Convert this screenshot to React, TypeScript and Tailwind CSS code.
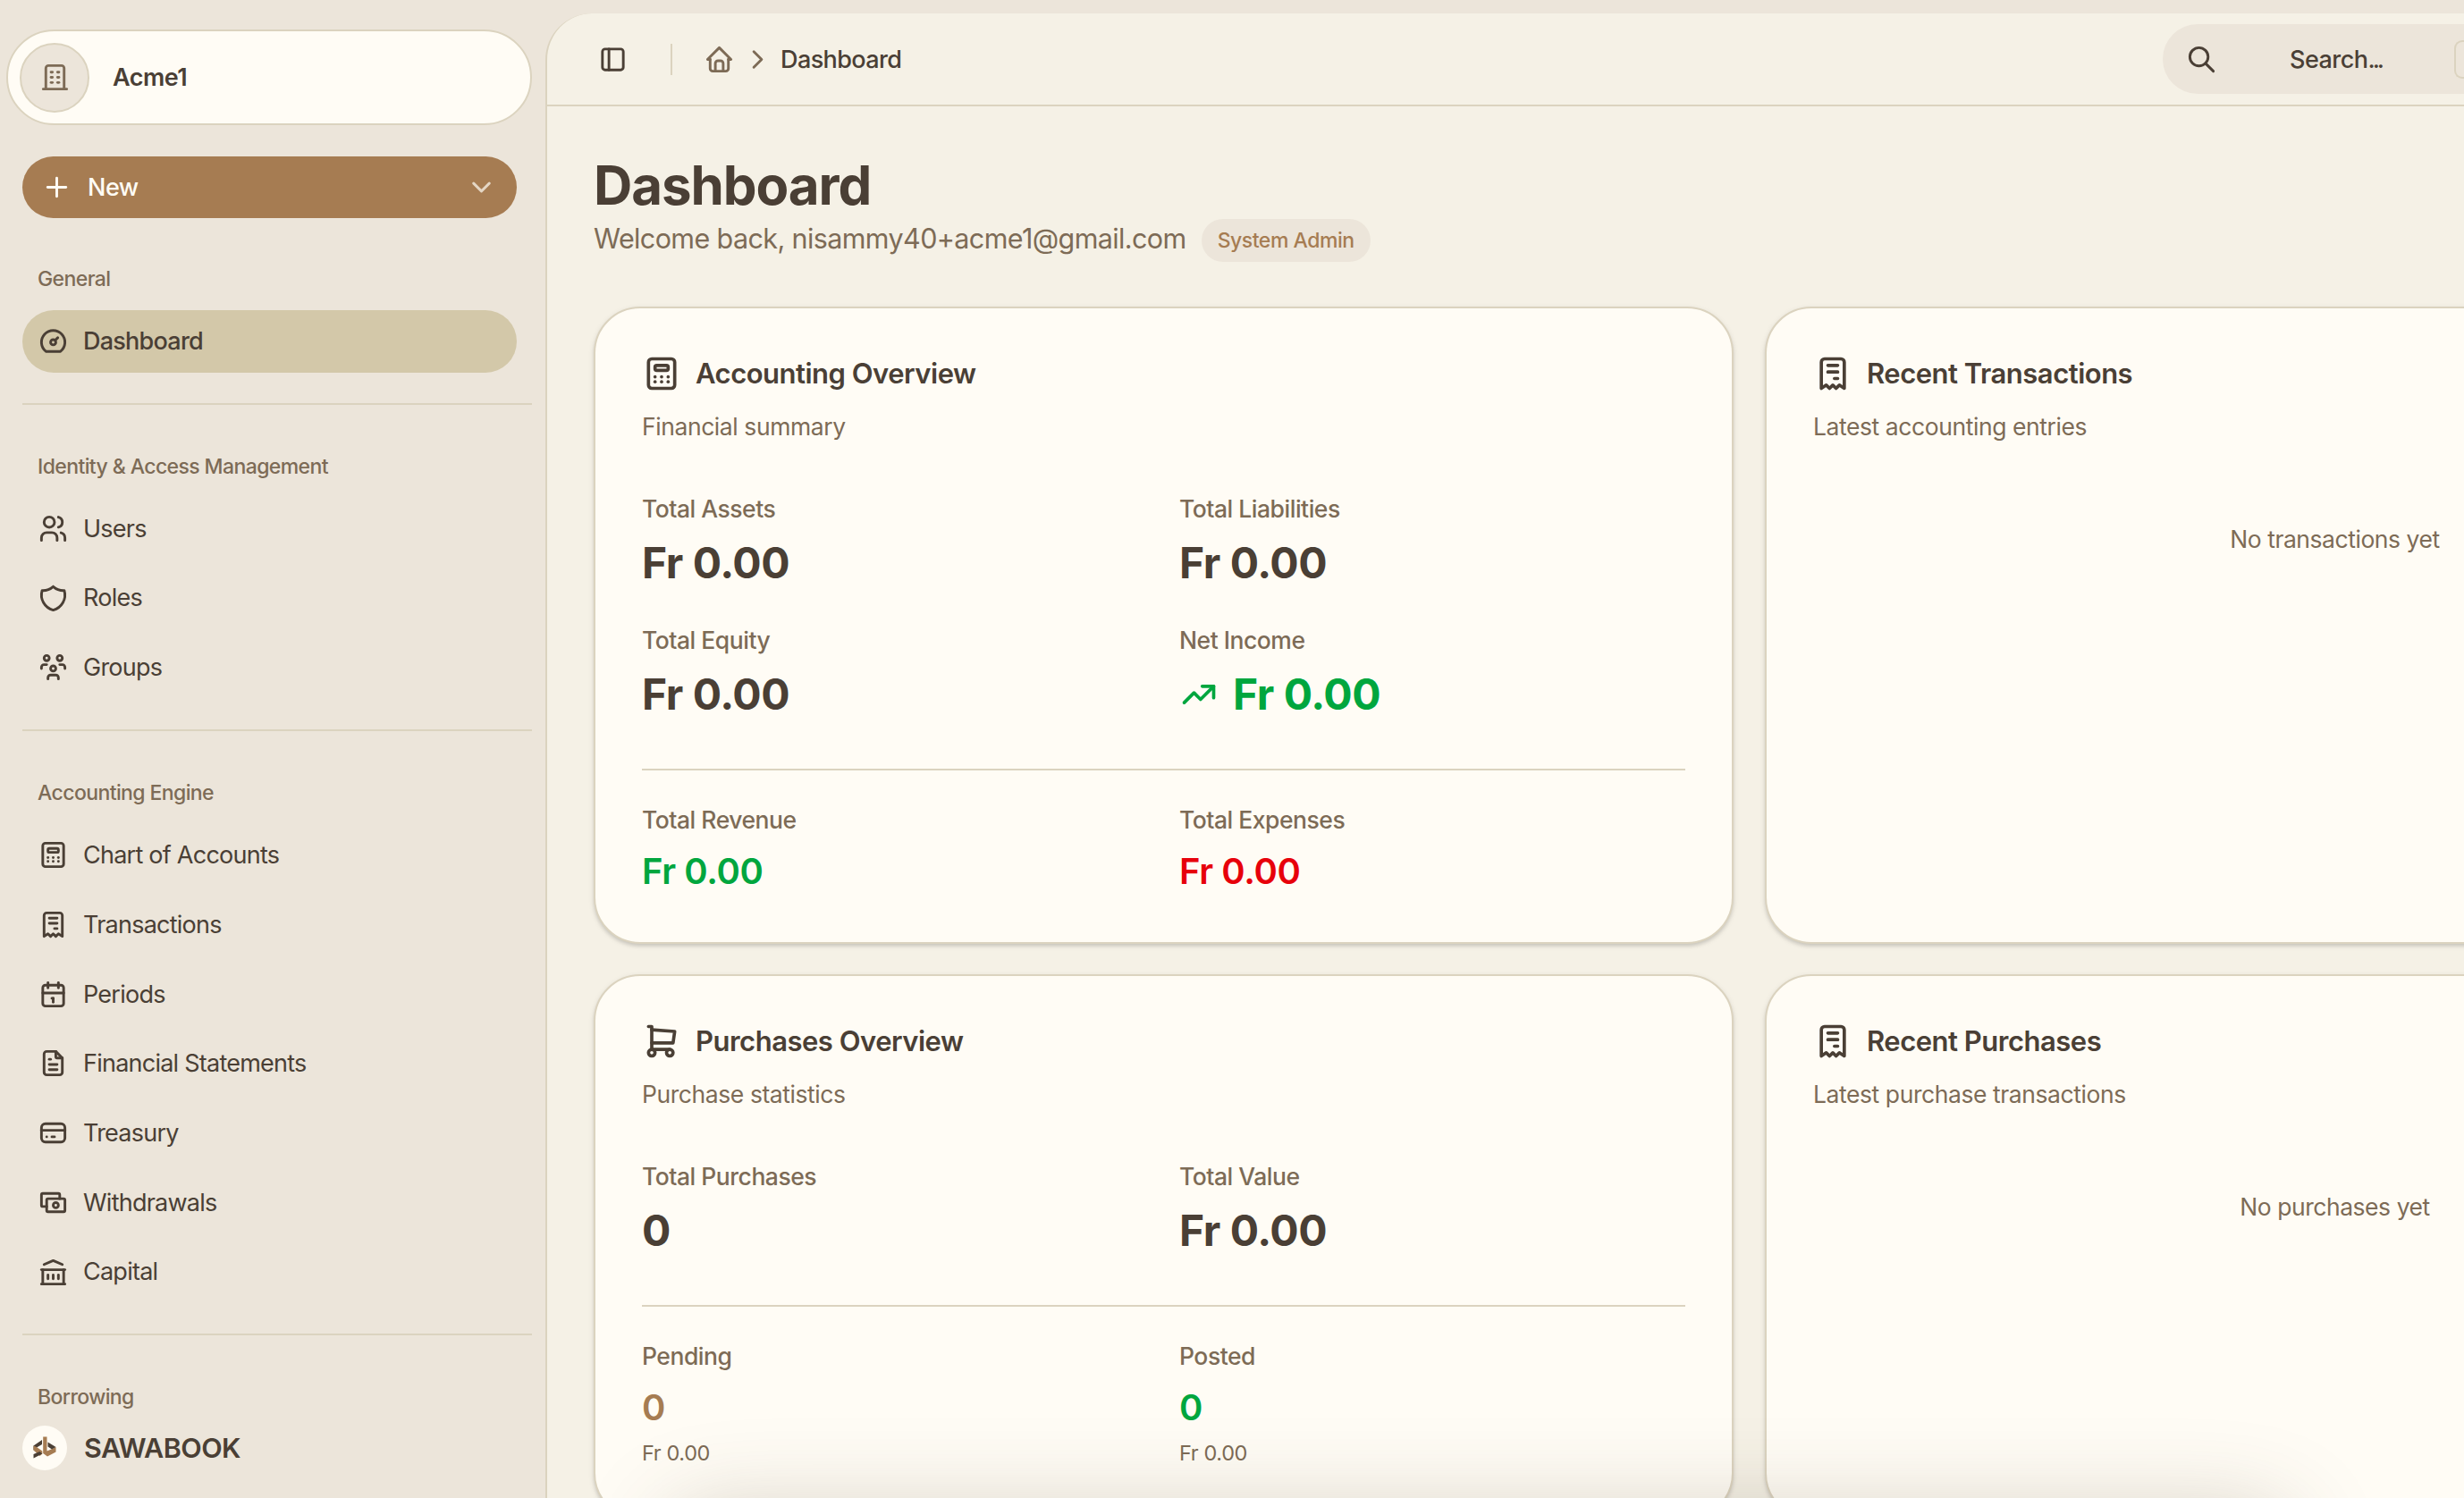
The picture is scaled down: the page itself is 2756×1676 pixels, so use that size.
import React from 'react';
import type { IconType } from 'react-icons';
import {
  TbBuilding,
  TbBuildingBank,
  TbCalculator,
  TbCalendar,
  TbChevronDown,
  TbChevronRight,
  TbCreditCard,
  TbDashboard,
  TbFileText,
  TbHome,
  TbLayoutSidebar,
  TbPlus,
  TbReceipt,
  TbSearch,
  TbShield,
  TbShoppingCart,
  TbTrendingUp,
  TbUsers,
  TbUsersGroup
} from 'react-icons/tb';

interface NavItem {
  label: string;
  icon: IconType;
  active?: boolean;
}

interface NavSection {
  title: string;
  items: NavItem[];
}

interface Stat {
  label: string;
  value: string;
  color?: string;
  icon?: IconType;
  note?: string;
}

const CashIcon: IconType = ({ className }) => (
  <svg className={className} viewBox="0 0 24 24" fill="none" stroke="currentColor" strokeWidth="2" strokeLinecap="round" strokeLinejoin="round">
    <path d="M7 15h-3a1 1 0 0 1 -1 -1v-8a1 1 0 0 1 1 -1h12a1 1 0 0 1 1 1v3" />
    <path d="M7 10a1 1 0 0 1 1 -1h12a1 1 0 0 1 1 1v8a1 1 0 0 1 -1 1h-12a1 1 0 0 1 -1 -1z" />
    <path d="M12 14a2 2 0 1 0 4 0a2 2 0 0 0 -4 0" />
  </svg>
);

const sections: NavSection[] = [
  {
    title: 'General',
    items: [{ label: 'Dashboard', icon: TbDashboard, active: true }]
  },
  {
    title: 'Identity & Access Management',
    items: [
      { label: 'Users', icon: TbUsers },
      { label: 'Roles', icon: TbShield },
      { label: 'Groups', icon: TbUsersGroup }
    ]
  },
  {
    title: 'Accounting Engine',
    items: [
      { label: 'Chart of Accounts', icon: TbCalculator },
      { label: 'Transactions', icon: TbReceipt },
      { label: 'Periods', icon: TbCalendar },
      { label: 'Financial Statements', icon: TbFileText },
      { label: 'Treasury', icon: TbCreditCard },
      { label: 'Withdrawals', icon: CashIcon },
      { label: 'Capital', icon: TbBuildingBank }
    ]
  },
  { title: 'Borrowing', items: [] }
];

const accountingStats: Stat[] = [
  { label: 'Total Assets', value: 'Fr 0.00' },
  { label: 'Total Liabilities', value: 'Fr 0.00' },
  { label: 'Total Equity', value: 'Fr 0.00' },
  { label: 'Net Income', value: 'Fr 0.00', color: 'text-[#00a63e]', icon: TbTrendingUp }
];

const accountingTotals: Stat[] = [
  { label: 'Total Revenue', value: 'Fr 0.00', color: 'text-[#00a63e]' },
  { label: 'Total Expenses', value: 'Fr 0.00', color: 'text-[#e7000b]' }
];

const purchaseStats: Stat[] = [
  { label: 'Total Purchases', value: '0' },
  { label: 'Total Value', value: 'Fr 0.00' }
];

const purchaseTotals: Stat[] = [
  { label: 'Pending', value: '0', color: 'text-[#a67c52]', note: 'Fr 0.00' },
  { label: 'Posted', value: '0', color: 'text-[#00a63e]', note: 'Fr 0.00' }
];

const Logo: React.FC = () => (
  <div className="flex size-[50px] shrink-0 items-center justify-center rounded-full bg-[#fffcf5]">
    <svg className="size-[50px]" viewBox="-0.5 2.5 50 50">
      <path d="M12 25 L21.5 18.5 V23.5 L15.5 27 L12 30z" fill="#4a3f35" />
      <path d="M12 25 L15.5 26.5 L21.8 31 V34 L19 36.5 L12 30z" fill="#a67c52" />
      <path d="M12 34.5 L19 31.5 L21.8 34 L12 39z" fill="#4a3f35" />
      <path d="M22.7 15 H27 V31 L33 28.5 L37 26.5 V32 L27.5 37 L22.7 33.5z" fill="#a67c52" />
      <path d="M28 21 L37 26.5 L32.5 29 L28 26z" fill="#4a3f35" />
    </svg>
  </div>
);

const Sidebar: React.FC = () => (
  <aside className="flex h-full w-[610px] shrink-0 flex-col overflow-hidden">
    <div className="mt-[33px] ml-[7px] flex h-[107px] w-[588px] shrink-0 items-center rounded-full border-2 border-[#dbd3bf] bg-[#fffcf5] pl-[13px]">
      <div className="flex size-[78px] items-center justify-center rounded-full border-2 border-[#dbd3bf] bg-[#ece5da] text-[#7d6b56]">
        <TbBuilding className="size-[35px]" />
      </div>
      <span className="ml-[26px] pt-[2px] text-[27px] font-semibold tracking-[-0.02em]">Acme1</span>
    </div>

    <button className="mt-[35px] ml-[25px] flex h-[69px] w-[553px] shrink-0 items-center rounded-full bg-[#a67c52] pr-[22px] pl-[21px] text-[#fffcf5]">
      <TbPlus className="size-[35px]" />
      <span className="ml-[17px] pt-[2px] text-[27px] font-medium tracking-[-0.02em]">New</span>
      <TbChevronDown className="ml-auto size-[35px] opacity-70" />
    </button>

    <nav className="ml-[25px] min-h-0 flex-1 overflow-hidden">
      {sections.map((section, index) => (
        <div
          key={section.title}
          className={`w-[570px] pb-[34px] ${index === 0 ? 'pt-[33.5px]' : 'pt-[35px]'} ${
            index < sections.length - 1 ? 'border-b-2 border-[#dbd3bf]' : ''
          }`}
        >
          <div className="flex h-[69px] items-center pl-[17px] text-[23px] font-medium tracking-[-0.026em] text-[#7d6b56]">
            {section.title}
          </div>
          <div className="flex w-[553px] flex-col gap-[7.7px]">
            {section.items.map((item) => (
              <a
                key={item.label}
                className={`flex h-[70px] items-center gap-[16px] rounded-full pl-[17px] text-[27px] tracking-[-0.028em] ${
                  item.active ? 'bg-[#d3c8a9] font-medium' : ''
                }`}
              >
                <item.icon className="size-[35px]" />
                <span className="pt-px">{item.label}</span>
              </a>
            ))}
          </div>
        </div>
      ))}
    </nav>

    <div className="flex h-[91px] shrink-0 items-start bg-[#ece5da] pt-[10px] pl-[25px]">
      <Logo />
      <span className="ml-[19px] flex h-[50px] items-center text-[30.5px] font-semibold tracking-[-0.018em]">SAWABOOK</span>
    </div>
  </aside>
);

const Header: React.FC = () => (
  <header className="flex h-[104px] shrink-0 items-center border-b-2 border-[#dbd3bf] pl-[56px]">
    <TbLayoutSidebar className="size-[35px]" />
    <div className="ml-[47px] h-[35px] w-[2px] bg-[#dbd3bf]" />
    <TbHome className="ml-[35px] size-[35px] text-[#7d6b56]" />
    <TbChevronRight className="ml-[8px] size-[35px] text-[#7d6b56]" />
    <span className="ml-[8px] pt-[2px] text-[27px] font-medium tracking-[-0.022em]">Dashboard</span>
    <div className="ml-auto flex h-[78px] w-[337px] items-center rounded-l-full bg-[#ece5da] pl-[26px]">
      <TbSearch className="size-[35px]" />
      <span className="ml-[81px] pt-[2px] text-[27px] font-medium tracking-[-0.02em]">
        Search<span className="tracking-[-0.11em]">...</span>
      </span>
      <div className="ml-auto h-[43px] w-[11px] rounded-l-[9px] border-2 border-r-0 border-[#dbd3bf]" />
    </div>
  </header>
);

interface CardProps {
  title: string;
  subtitle: string;
  icon: IconType;
  children: React.ReactNode;
}

const Card: React.FC<CardProps> = ({ title, subtitle, icon: Icon, children }) => (
  <section className="rounded-[52px] border-2 border-[#dbd3bf] bg-[#fffcf5] p-[52px] shadow-[0_2px_6px_rgba(0,0,0,0.1),0_3px_4px_-1px_rgba(0,0,0,0.12)]">
    <div className="flex h-[42px] items-center gap-[16px]">
      <Icon className="size-[44px]" />
      <h2 className="text-[31px] font-semibold tracking-[-0.016em]">{title}</h2>
    </div>
    <p className="mt-[17px] flex h-[42px] items-center pt-[2px] text-[26.5px] tracking-[-0.016em] text-[#7d6b56]">{subtitle}</p>
    <div className="mt-[52px]">{children}</div>
  </section>
);

const StatGrid: React.FC<{ stats: Stat[]; small?: boolean }> = ({ stats, small }) => (
  <div className="grid grid-cols-2 gap-x-[35px] gap-y-[37px]">
    {stats.map((stat) => (
      <div key={stat.label}>
        <div className="flex h-[38px] items-center pt-[2px] text-[26.5px] font-medium tracking-[-0.018em] text-[#7d6b56]">{stat.label}</div>
        <div
          className={`mt-[10px] flex items-center gap-[16px] pt-px ${
            small ? 'h-[56px] text-[40px] font-semibold' : 'h-[62px] text-[48px] font-bold'
          } tracking-[-0.01em] ${stat.color || ''}`}
        >
          {stat.icon && <stat.icon className="size-[44px]" />}
          {stat.value}
        </div>
        {stat.note && <div className="mt-[4px] flex h-[40px] items-center text-[23.5px] tracking-[-0.016em] text-[#7d6b56]">{stat.note}</div>}
      </div>
    ))}
  </div>
);

const EmptyState: React.FC<{ text: string }> = ({ text }) => (
  <p className="flex h-[106px] items-center justify-center pt-[2px] text-[26.5px] tracking-[-0.017em] text-[#7d6b56]">{text}</p>
);

const App: React.FC = () => {
  return (
    <div className="relative flex h-[1676px] w-[2756px] overflow-hidden bg-[#ece5da] font-['Inter',sans-serif] text-[#4a3f35]">
      <Sidebar />

      <main className="mt-[15px] flex min-w-0 flex-1 flex-col overflow-hidden rounded-tl-[52px] border-l-2 border-[#dbd3bf] bg-[#f5f1e6]">
        <Header />

        <div className="min-h-0 flex-1 overflow-hidden pl-[52px]">
          <h1 className="mt-[52px] flex h-[70px] items-center pt-px text-[60px] font-bold tracking-[-0.018em]">Dashboard</h1>
          <div className="flex h-[52px] items-center">
            <span className="text-[30.5px] tracking-[-0.02em] text-[#7d6b56]">Welcome back, nisammy40+acme1@gmail.com</span>
            <span className="mt-[4px] ml-[17px] flex h-[48px] items-center rounded-full bg-[#ece5da] px-[18px] text-[23px] font-medium tracking-[-0.02em] text-[#a67c52]">
              System Admin
            </span>
          </div>

          <div className="mt-[50px] grid w-[2585px] grid-cols-[1275px_1275px] gap-x-[35px] gap-y-[34px]">
            <Card title="Accounting Overview" subtitle="Financial summary" icon={TbCalculator}>
              <StatGrid stats={accountingStats} />
              <div className="mt-[53px] border-t-2 border-[#dbd3bf] pt-[36px]">
                <StatGrid stats={accountingTotals} small />
              </div>
            </Card>
            <Card title="Recent Transactions" subtitle="Latest accounting entries" icon={TbReceipt}>
              <EmptyState text="No transactions yet" />
            </Card>
            <Card title="Purchases Overview" subtitle="Purchase statistics" icon={TbShoppingCart}>
              <StatGrid stats={purchaseStats} />
              <div className="mt-[53px] border-t-2 border-[#dbd3bf] pt-[36px]">
                <StatGrid stats={purchaseTotals} small />
              </div>
            </Card>
            <Card title="Recent Purchases" subtitle="Latest purchase transactions" icon={TbReceipt}>
              <EmptyState text="No purchases yet" />
            </Card>
          </div>
        </div>
      </main>

      {/* glow of the docked bar that sits just below the fold */}
      <div className="absolute top-[1692px] left-[745px] h-[100px] w-[1820px] rounded-[52px] shadow-[0_0_100px_rgba(84,66,48,0.25)]" />
    </div>
  );
};

export default App;
